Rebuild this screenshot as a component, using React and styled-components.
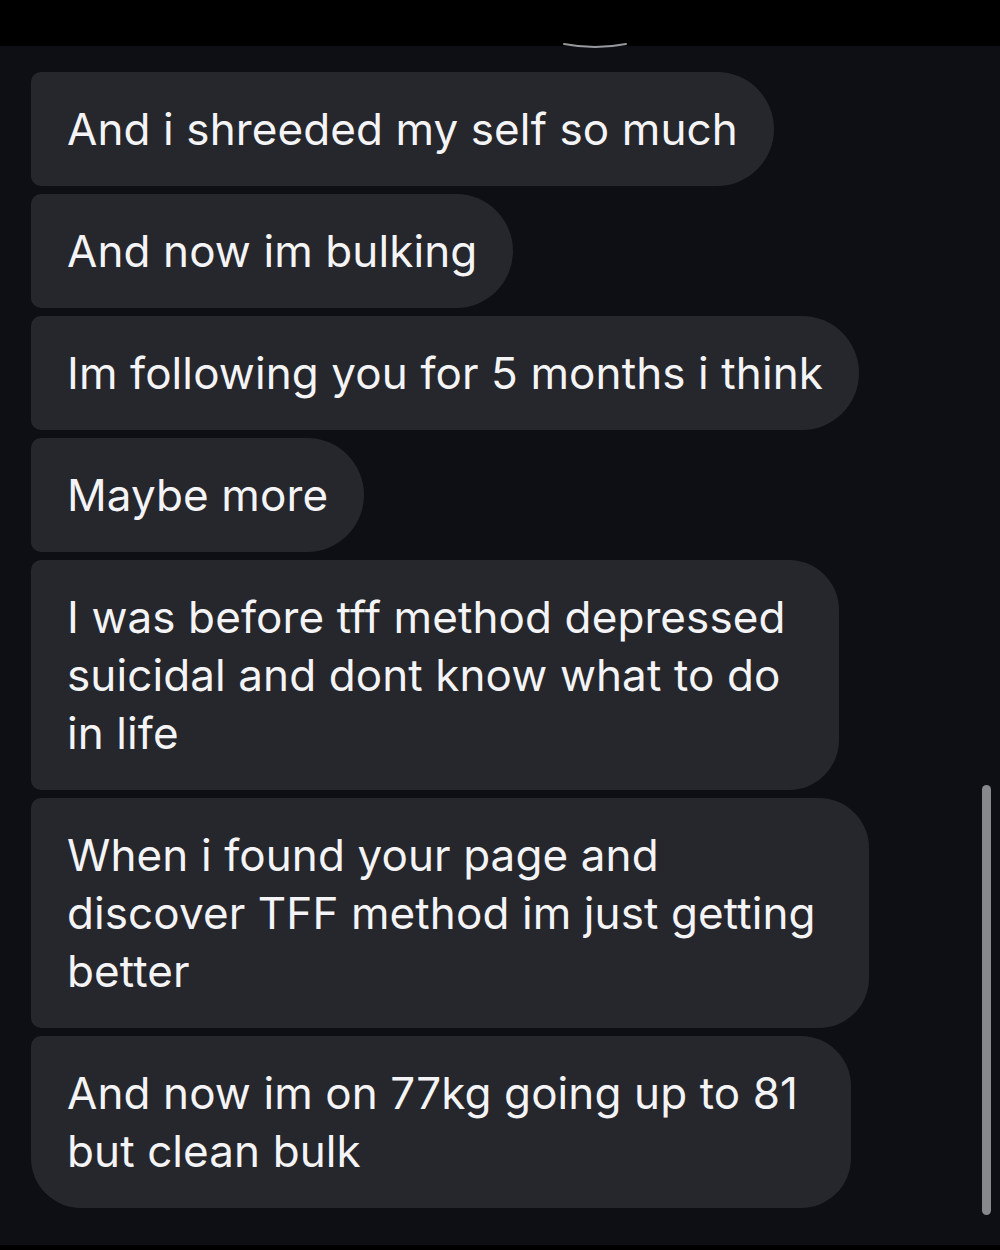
import React from "react";
import styled, { createGlobalStyle } from "styled-components";

const Global = createGlobalStyle`
  html, body { margin: 0; padding: 0; background: #0d0f14; }
  #root { width: 1000px; height: 1250px; }
`;

const Screen = styled.div`
  position: relative;
  width: 1000px;
  height: 1250px;
  background: #0d0f14;
  display: flex;
  flex-direction: column;
  overflow: hidden;
  font-family: Inter, "Liberation Sans", sans-serif;
`;

const TopBar = styled.div`
  position: relative;
  height: 46px;
  background: #000;
  flex: none;
`;

const Arc = styled.svg`
  position: absolute;
  left: 560px;
  top: 40px;
`;

const Thread = styled.div`
  flex: 1;
  display: flex;
  flex-direction: column;
  align-items: flex-start;
  gap: 8px;
  padding: 26px 0 0 31px;
`;

const Bubble = styled.div`
  background: #26272c;
  color: #f4f4f6;
  font-size: 44px;
  letter-spacing: 0.1px;
  font-variant-ligatures: none;
  line-height: 58px;
  padding: 28px ${(p) => (p.$multi ? 53 : 36)}px 28px 36px;
  border-radius: 10px ${(p) => (p.$multi ? 50 : 58)}px ${(p) => (p.$multi ? 50 : 58)}px
    ${(p) => (p.$last ? 50 : 10)}px;
  white-space: nowrap;
`;

const BottomBar = styled.div`
  height: 5px;
  background: #000;
  flex: none;
`;

const Scrollbar = styled.div`
  position: absolute;
  left: 982px;
  top: 785px;
  width: 9px;
  height: 430px;
  border-radius: 5px;
  background: #86888c;
`;

const messages = [
  ["And i shreeded my self so much"],
  ["And now im bulking"],
  ["Im following you for 5 months i think"],
  ["Maybe more"],
  ["I was before tff method depressed", "suicidal and dont know what to do", "in life"],
  ["When i found your page and", "discover TFF method im just getting", "better"],
  ["And now im on 77kg going up to 81", "but clean bulk"],
];

export default function App() {
  return (
    <Screen>
      <Global />
      <TopBar>
        <Arc width="70" height="10" viewBox="0 0 70 10">
          <path d="M4 4 Q35 10 66 4" stroke="#bdbdc2" strokeWidth="2" fill="none" strokeLinecap="round" opacity="0.8" />
        </Arc>
      </TopBar>
      <Thread>
        {messages.map((lines, i) => (
          <Bubble key={i} $multi={lines.length > 1} $last={i === messages.length - 1}>
            {lines.map((l, j) => (
              <React.Fragment key={j}>
                {j > 0 && <br />}
                {l}
              </React.Fragment>
            ))}
          </Bubble>
        ))}
      </Thread>
      <BottomBar />
      <Scrollbar />
    </Screen>
  );
}
